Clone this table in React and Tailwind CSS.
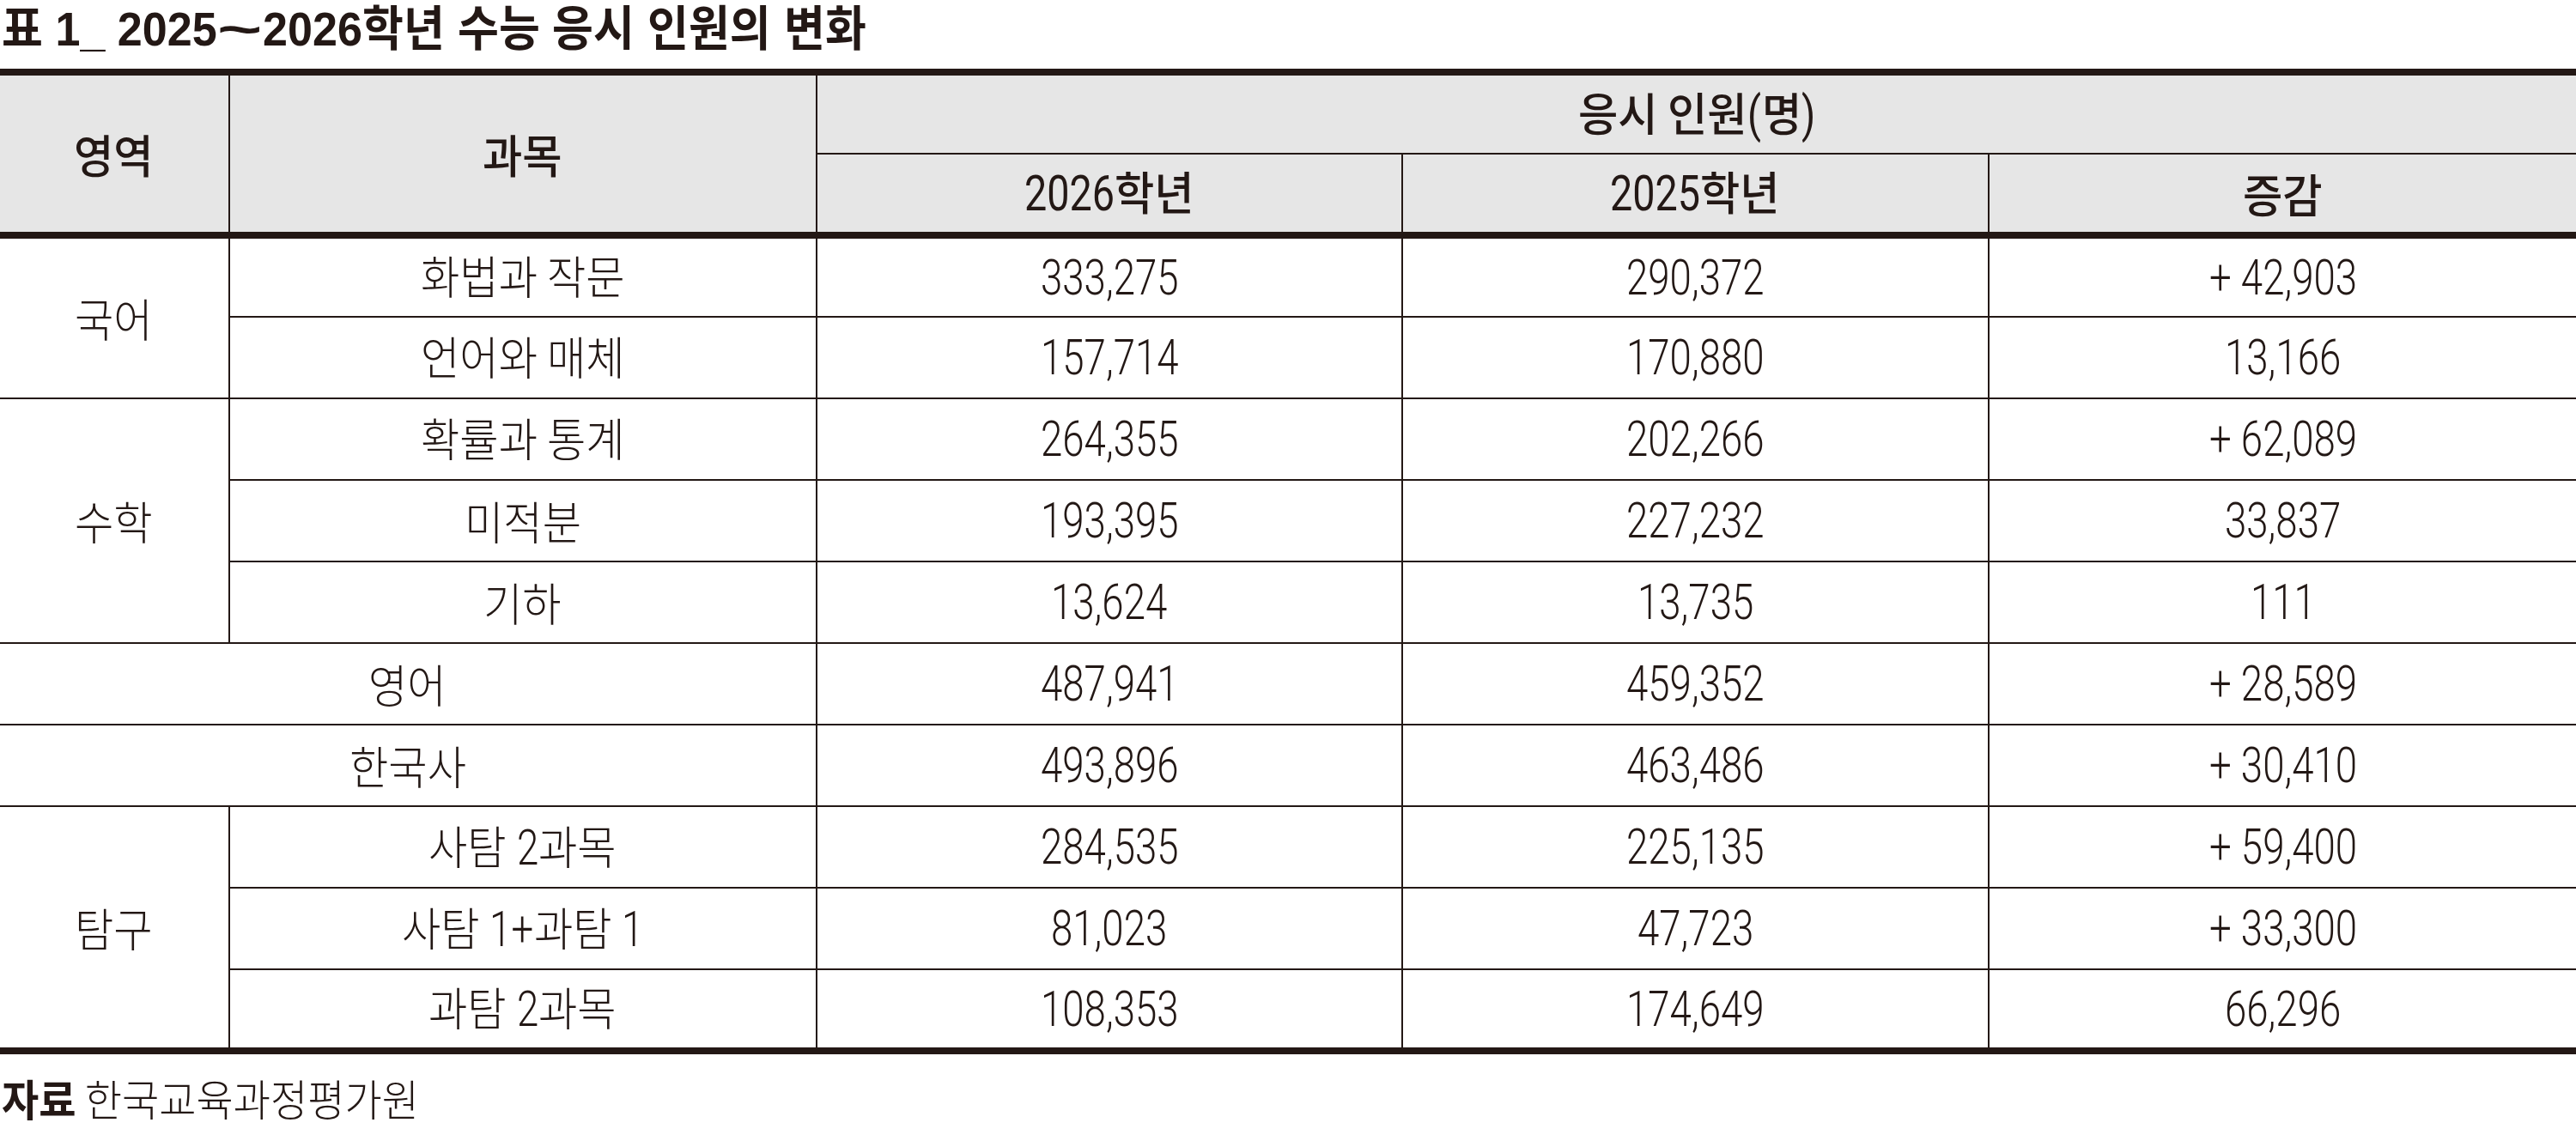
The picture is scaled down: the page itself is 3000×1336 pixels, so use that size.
import React, { useLayoutEffect, useRef, useState } from 'react';

const SPLIT_RE = /([\uAC00-\uD7A3]+|~)/;
const HANGUL = /[\uAC00-\uD7A3]/;

const BODY = {
  lead: 'leading-none',
  kScale: 0.93,
  kCls: "text-[53px] font-light [font-family:'Noto_Sans_CJK_KR',sans-serif] scale-x-[0.93]",
  oScale: 0.8,
  oCls: "text-[57px] font-light [font-family:'Roboto','Liberation_Sans',sans-serif] scale-x-[0.8]",
  tScale: 0.8,
  tCls: "text-[57px] font-light [font-family:'Roboto','Liberation_Sans',sans-serif] scale-x-[0.8]",
};

const HEAD = {
  lead: 'leading-none',
  kScale: 0.95,
  kCls: "text-[53px] font-medium [font-family:'Noto_Sans_CJK_KR',sans-serif] scale-x-[0.95]",
  oScale: 0.82,
  oCls: "text-[57px] font-normal [font-family:'Roboto','Liberation_Sans',sans-serif] scale-x-[0.82]",
  tScale: 0.82,
  tCls: "text-[57px] font-normal [font-family:'Roboto','Liberation_Sans',sans-serif] scale-x-[0.82]",
};

const TITLE = {
  lead: 'leading-none',
  kScale: 0.93,
  kCls: "text-[56px] font-bold [font-family:'Noto_Sans_CJK_KR',sans-serif] scale-x-[0.93]",
  oScale: 0.93,
  oCls: "text-[56px] font-bold [font-family:'Liberation_Sans',sans-serif] scale-x-[0.93]",
  tScale: 1.6,
  tCls: "text-[56px] font-bold [font-family:'Liberation_Sans',sans-serif] scale-x-[1.6]",
};

function Run({ text, cls, scale }) {
  const ref = useRef(null);
  const [w, setW] = useState(null);
  useLayoutEffect(() => {
    if (ref.current) setW(ref.current.offsetWidth * scale);
  }, [text, scale]);
  return (
    <span className="inline-block whitespace-pre" style={w != null ? { width: w } : undefined}>
      <span ref={ref} className={`inline-block origin-left whitespace-pre ${cls}`}>
        {text}
      </span>
    </span>
  );
}

function Mixed({ s, v }) {
  const parts = s.split(SPLIT_RE).filter((p) => p !== '');
  return (
    <span className={`inline-flex items-baseline whitespace-pre text-[#231815] ${v.lead}`}>
      {parts.map((p, i) => {
        if (HANGUL.test(p)) return <Run key={i} text={p} cls={v.kCls} scale={v.kScale} />;
        if (p === '~') return <Run key={i} text={p} cls={v.tCls} scale={v.tScale} />;
        return <Run key={i} text={p} cls={v.oCls} scale={v.oScale} />;
      })}
    </span>
  );
}

function HCell({ children, className = '' }) {
  return (
    <div className={`flex items-center justify-center bg-[#e6e6e6] ${className}`}>
      <Mixed s={children} v={HEAD} />
    </div>
  );
}

function BCell({ children, className = '' }) {
  return (
    <div className={`flex items-center justify-center bg-white ${className}`}>
      <Mixed s={children} v={BODY} />
    </div>
  );
}

const rows = [
  { area: '국어', span: 2, subj: '화법과 작문', a: '333,275', b: '290,372', d: '+ 42,903' },
  { subj: '언어와 매체', a: '157,714', b: '170,880', d: '13,166' },
  { area: '수학', span: 3, subj: '확률과 통계', a: '264,355', b: '202,266', d: '+ 62,089' },
  { subj: '미적분', a: '193,395', b: '227,232', d: '33,837' },
  { subj: '기하', a: '13,624', b: '13,735', d: '111' },
  { wide: '영어', a: '487,941', b: '459,352', d: '+ 28,589' },
  { wide: '한국사', a: '493,896', b: '463,486', d: '+ 30,410' },
  { area: '탐구', span: 3, subj: '사탐 2과목', a: '284,535', b: '225,135', d: '+ 59,400' },
  { subj: '사탐 1+과탐 1', a: '81,023', b: '47,723', d: '+ 33,300' },
  { subj: '과탐 2과목', a: '108,353', b: '174,649', d: '66,296' },
];

export default function App() {
  const cells = [];
  rows.forEach((r, i) => {
    if (r.area) {
      const spanCls = r.span === 2 ? 'row-span-2' : 'row-span-3';
      cells.push(
        <BCell key={`area${i}`} className={spanCls}>
          {r.area}
        </BCell>
      );
    }
    if (r.wide) {
      cells.push(
        <BCell key={`wide${i}`} className="col-span-2">
          {r.wide}
        </BCell>
      );
    } else {
      cells.push(<BCell key={`subj${i}`}>{r.subj}</BCell>);
    }
    cells.push(<BCell key={`a${i}`}>{r.a}</BCell>);
    cells.push(<BCell key={`b${i}`}>{r.b}</BCell>);
    cells.push(<BCell key={`d${i}`}>{r.d}</BCell>);
  });

  return (
    <div className="w-[3000px] h-[1336px] bg-white overflow-hidden text-[#231815]">
      {/* Title */}
      <div className="h-[80px] flex items-start pt-[1px] pl-[2px]">
        <Mixed s="표 1_ 2025~2026학년 수능 응시 인원의 변화" v={TITLE} />
      </div>

      {/* Top rule */}
      <div className="h-[8px] bg-[#231815]" />

      {/* Header */}
      <div className="grid grid-cols-[266px_682px_680px_681px_683px] grid-rows-[90px_90px] gap-[2px] bg-[#231815]">
        <HCell className="row-span-2">영역</HCell>
        <HCell className="row-span-2">과목</HCell>
        <HCell className="col-span-3">응시 인원(명)</HCell>
        <HCell>2026학년</HCell>
        <HCell>2025학년</HCell>
        <HCell>증감</HCell>
      </div>

      {/* Header bottom rule */}
      <div className="h-[8px] bg-[#231815]" />

      {/* Body */}
      <div className="grid grid-cols-[266px_682px_680px_681px_683px] grid-rows-[90px_repeat(8,93px)_90px] gap-[2px] bg-[#231815]">
        {cells}
      </div>

      {/* Bottom rule */}
      <div className="h-[8px] bg-[#231815]" />

      {/* Source */}
      <div className="pt-[20px] pl-[2px]">
        <span className="inline-block origin-left scale-x-[0.94] whitespace-pre [font-family:'Noto_Sans_CJK_KR',sans-serif] text-[50px] leading-[1.2]">
          <span className="font-bold">자료</span>
          <span className="font-light"> 한국교육과정평가원</span>
        </span>
      </div>
    </div>
  );
}
